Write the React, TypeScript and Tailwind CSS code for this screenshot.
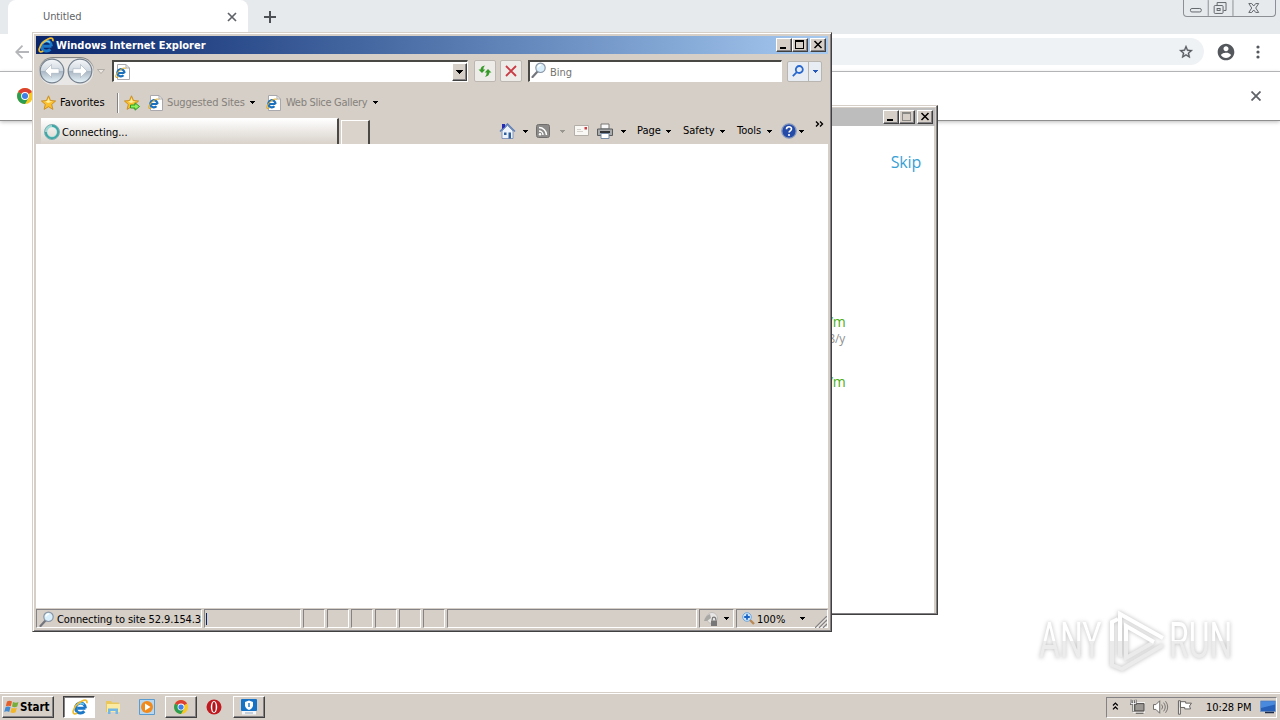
import React from 'react';
import clsx from 'clsx';

const raised =
  'border border-t-white border-l-white border-r-[#404040] border-b-[#404040] shadow-[inset_-1px_-1px_0_#848284]';
const sunken = 'border border-t-[#848284] border-l-[#848284] border-r-white border-b-white';

function IeLogo({ className }: { className?: string }) {
  return (
    <svg viewBox="0 0 16 16" className={clsx('shrink-0', className)} fill="none">
      <path d="M13.500 9.2H5.2M13.500 9.2A5 5 0 1 0 12.300 12.300" stroke="#1b78c8" strokeWidth="3" />
      <path d="M5 6.200A4.7 4.7 0 0 1 12 5.500" stroke="#6ccbf2" strokeWidth="1.4" />
      <path d="M14.8 4.2C15.6 1.2 13.4.4 10 2 5.800 4 2.200 8.300 1.200 12 .6 15.100 2.800 15.500 5.200 14" stroke="#eebb30" strokeWidth="1.7" />
    </svg>
  );
}

function IePage({ className }: { className?: string }) {
  return (
    <svg viewBox="0 0 16 16" className={clsx('h-4 w-4 shrink-0', className)} fill="none">
      <path d="M3.500.5H12l3.500 3.500v11.500h-12z" fill="#fff" stroke="#a9a9ad" />
      <path d="M12 .5V4h3.500" stroke="#a9a9ad" />
      <path d="M10.500 9H4.500M10.500 9A3.600 3.600 0 1 0 9.500 11.300" stroke="#1b70be" strokeWidth="2.200" />
      <path d="M11.700 4.500C10 3 5 5.500 2 11c-1 2.500.5 3 2.500 1.700" stroke="#dfae31" strokeWidth="1.100" />
    </svg>
  );
}

function Caret({ className, color = '#000' }: { className?: string; color?: string }) {
  return (
    <svg viewBox="0 0 5 3" className={clsx('h-[3px] w-[5px] shrink-0', className)} shapeRendering="crispEdges">
      <path d="M0 0h5v1H4v1H3v1H2V2H1V1H0z" fill={color} />
    </svg>
  );
}

function ChromeLogo({ className }: { className?: string }) {
  return (
    <svg viewBox="0 0 16 16" className={clsx('h-4 w-4 shrink-0', className)}>
      <circle cx="8" cy="8" r="8" fill="#f9c823" />
      <path d="M8 8 1.100 4A8 8 0 0 1 14.900 4z" fill="#dc3f34" />
      <path d="M1.100 4A8 8 0 0 0 8 16l3.500-6L8 8z" fill="#2b9e54" />
      <circle cx="8" cy="8" r="3.900" fill="#fff" />
      <circle cx="8" cy="8" r="3" fill="#3f7fe6" />
    </svg>
  );
}

function Magnifier({ className }: { className?: string }) {
  return (
    <svg viewBox="0 0 16 16" className={clsx('h-4 w-4 shrink-0', className)} fill="none">
      <path d="M6.500 9.500 1.500 15" stroke="#73777d" strokeWidth="2.200" strokeLinecap="round" />
      <circle cx="9.500" cy="5.800" r="4.700" fill="#d9effb" stroke="#8a96a6" strokeWidth="1.200" />
      <path d="M7 5.500A3 3 0 0 1 10 3" stroke="#fff" strokeWidth="1.500" />
    </svg>
  );
}

function Star({ add }: { add?: boolean }) {
  return (
    <svg viewBox="0 0 16 16" className="h-4 w-4 shrink-0">
      <path d="m7.500.8 2 4.700 5.100.5-3.900 3.400 1.200 5-4.400-2.700-4.400 2.700 1.200-5L.4 6l5.100-.5z" fill="#fbc02e" stroke="#c98a1c" strokeWidth=".9" />
      <path d="m7.500 3 1.200 3.200 3 .3L7 8 4 6.400l2.400-.3z" fill="#fff0a6" />
      {add && <path d="M6.500 10h4.500V7.800l4.500 3.700-4.500 3.700V13H6.500z" fill="#8ff05a" stroke="#2b9b26" />}
    </svg>
  );
}

type WindowButtonKind = 'min' | 'max' | 'close';

function WindowButton({ kind, disabled }: { kind: WindowButtonKind; disabled?: boolean }) {
  return (
    <div className={clsx('flex h-[14px] w-4 items-center justify-center bg-[#d6cfc7]', raised, kind === 'close' && 'ml-0.5')}>
      <svg viewBox="0 0 12 10" className="h-[10px] w-3 shrink-0" fill="none">
        {kind === 'min' && <path d="M2 8h6" stroke="#000" strokeWidth="2" />}
        {kind === 'max' && (
          <path d="M1.500.5h8v8h-8zM1 1.500h9" stroke={disabled ? '#8b8985' : '#000'} shapeRendering="crispEdges" />
        )}
        {kind === 'close' && <path d="m2.500 1 7 7M9.500 1l-7 7" stroke="#000" strokeWidth="1.500" />}
      </svg>
    </div>
  );
}

function NavCircle({ flip }: { flip?: boolean }) {
  return (
    <svg viewBox="0 0 26 26" className={clsx('h-[26px] w-[26px] shrink-0', flip && '-scale-x-100')}>
      <defs>
        <linearGradient id="nav" x1="0" y1="0" x2="0" y2="1">
          <stop offset="0" stopColor="#f6f8fa" />
          <stop offset=".48" stopColor="#d0d8e0" />
          <stop offset=".52" stopColor="#aab7c4" />
          <stop offset="1" stopColor="#e8f4fa" />
        </linearGradient>
      </defs>
      <circle cx="13" cy="13" r="11.800" fill="url(#nav)" stroke="#74808d" strokeWidth="1.200" />
      <path d="m12.500 6.500-6.500 6.500 6.500 6.500v-4.200H20v-4.600h-7.500z" fill="#fff" stroke="#a4b0bc" strokeWidth=".6" />
    </svg>
  );
}

function ChromeWindow() {
  return (
    <div className="flex h-[692px] flex-col bg-white">
      <div className="flex h-[34px] bg-[#e7eaed] pl-2">
        <div className="flex w-60 items-center rounded-t-lg bg-white pr-[11px] pl-[35px]">
          <span className="flex-1 pt-px text-[11px] tracking-[-0.1px] text-[#5f6368]">Untitled</span>
          <svg viewBox="0 0 10 10" className="h-[10px] w-[10px]" stroke="#5f6368" strokeWidth="1.700">
            <path d="m1 1 8 8M9 1 1 9" />
          </svg>
        </div>
        <svg viewBox="0 0 12 12" className="mt-[11px] ml-4 h-3 w-3" stroke="#4d5156" strokeWidth="2">
          <path d="M6 0v12M0 6h12" />
        </svg>
        <div className="mr-[4px] ml-auto flex h-[17px] w-[93px] rounded-b-[4px] border border-t-0 border-[#8c9094]">
          <svg viewBox="0 0 92 16" className="h-4 w-[91px]" fill="none" stroke="#62676c">
            <path d="M24.500 0v16M49.500 0v16" stroke="#8c9094" />
            <rect x="6.500" y="8.500" width="11" height="3.500" rx="1.500" />
            <path d="M33.500 5V2.500h9v8H40" />
            <rect x="30.500" y="5.500" width="9" height="8" rx="1" />
            <rect x="33.500" y="8.500" width="3" height="2" />
            <path d="M65.500 3.500h3l2 2.500 2-2.500h3l-3 4.500 3 4.500h-3l-2-2.500-2 2.500h-3l3-4.500z" />
          </svg>
        </div>
      </div>
      <div className="flex h-[38px] items-center border-b border-[#b0b2b4] pr-[15px] pb-[2px] pl-[15px]">
        <svg viewBox="0 0 14 14" className="h-[14px] w-[14px]" fill="none" stroke="#b4b6b9" strokeWidth="1.800">
          <path d="M7.500.7 1.200 7l6.300 6.300M1 7h13" />
        </svg>
        <div className="ml-[10px] flex h-[27px] flex-1 items-center justify-end rounded-full bg-[#eff2f5] pr-[10px]">
          <svg viewBox="0 0 24 24" className="h-4 w-4" fill="#54585d" stroke="#54585d" strokeWidth=".5">
            <path d="M22 9.240l-7.190-.62L12 2 9.190 8.630 2 9.240l5.460 4.730L5.820 21 12 17.270 18.180 21l-1.630-7.030L22 9.240zM12 15.400l-3.760 2.270 1-4.280-3.320-2.880 4.380-.38L12 6.100l1.710 4.040 4.380.38-3.320 2.880 1 4.280L12 15.400z" />
          </svg>
        </div>
        <svg viewBox="0 0 24 24" className="ml-[12px] h-5 w-5" fill="#54585d">
          <path d="M12 2C6.480 2 2 6.480 2 12s4.480 10 10 10 10-4.480 10-10S17.520 2 12 2zm0 3c1.660 0 3 1.340 3 3s-1.340 3-3 3-3-1.340-3-3 1.340-3 3-3zm0 14.200c-2.500 0-4.710-1.280-6-3.220.03-1.990 4-3.080 6-3.080 1.990 0 5.970 1.090 6 3.080-1.290 1.940-3.500 3.220-6 3.220z" />
        </svg>
        <svg viewBox="0 0 4 14" className="ml-[20px] h-[14px] w-1" fill="#54585d">
          <circle cx="2" cy="2" r="1.600" />
          <circle cx="2" cy="7" r="1.600" />
          <circle cx="2" cy="12" r="1.600" />
        </svg>
        <div className="w-[5px]" />
      </div>
      <div className="flex h-[49px] items-center justify-between border-b border-[#8e8e8e] pr-[19px] pl-[17px] shadow-[0_1px_4px_#bbb]">
        <ChromeLogo />
        <svg viewBox="0 0 10 10" className="h-[10px] w-[10px]" stroke="#5f6368" strokeWidth="1.800">
          <path d="m.5.5 9 9M9.500.5l-9 9" />
        </svg>
      </div>
    </div>
  );
}

function SetupWindow() {
  return (
    <div className="absolute top-[105px] left-[430px] flex h-[510px] w-[508px] flex-col border border-t-[#d6cfc7] border-l-[#d6cfc7] border-r-[#404040] border-b-[#404040] bg-white shadow-[inset_-1px_-1px_0_#848284,inset_1px_1px_0_#fff,inset_-3px_2px_0_#d6cfc7]">
      <div className="mt-[2px] mr-[2px] ml-[3px] flex h-[18px] items-center justify-end bg-[#bdbdbd] pr-0.5">
        <WindowButton kind="min" />
        <WindowButton kind="max" disabled />
        <WindowButton kind="close" />
      </div>
      <div className="flex flex-col items-end font-['Open_Sans',sans-serif]">
        <span className="mt-[25px] mr-4 text-[16px] leading-[22px] tracking-[-0.2px] text-[#399fd3]">Skip</span>
        <div className="mt-[140px] mr-[92px] flex flex-col items-end tracking-[-0.600px]">
          <span className="text-[14px] leading-[18px] text-[#4cae16]">$4.99/m</span>
          <span className="text-[12px] leading-4 tracking-[-0.200px] text-[#919191]">$59.88/y</span>
          <span className="mt-[26px] text-[14px] leading-[18px] text-[#4cae16]">$9.99/m</span>
        </div>
      </div>
    </div>
  );
}

function AddressRow() {
  return (
    <div className="flex h-[34px] items-center pl-[3px]">
      <div className="flex h-[28px] w-[55px] items-center gap-0.5 rounded-full bg-[#e9e7e5] shadow-[inset_0_1px_1px_#777]">
        <NavCircle />
        <NavCircle flip />
      </div>
      <svg viewBox="0 0 8 5" className="ml-[3px] h-[5px] w-2" fill="#ece8e4" stroke="#a7a29b" strokeWidth=".8">
        <path d="M.5.5h7L4 4.500z" />
      </svg>
      <div className="ml-[7px] flex h-[22px] w-[356px] items-center border-t-2 border-l-2 border-r border-b border-t-[#4a4845] border-l-[#4a4845] border-r-white border-b-white bg-white">
        <IePage />
        <div className={clsx('ml-auto flex h-[18px] w-[15px] items-center justify-center bg-[#d6cfc7]', raised)}>
          <svg viewBox="0 0 7 4" className="h-1 w-[7px]" shapeRendering="crispEdges">
            <path d="M0 0h7v1H6v1H5v1H4v1H3V3H2V2H1V1H0z" />
          </svg>
        </div>
      </div>
      <div className="ml-[6px] flex h-[22px] w-[22px] items-center justify-center rounded-[2px] border border-[#bcb7b1] bg-[#eeece9]">
        <svg viewBox="0 0 16 16" className="h-4 w-4 shrink-0" fill="#369a28">
          <path d="M1.500 6.500h2Q3.800 3 8 2.500 6.300 4 6.300 6.500h2L5 10z" />
          <path d="M14.500 9.500h-2q-.3 3.500-4.500 4.500 1.800-2 1.700-4.500h-2L11 6z" />
        </svg>
      </div>
      <div className="ml-1 flex h-[22px] w-[22px] items-center justify-center rounded-[2px] border border-[#bcb7b1] bg-[#eeece9]">
        <svg viewBox="0 0 12 12" className="h-3 w-3" stroke="#c93c45" strokeWidth="1.900">
          <path d="m1 1 10 10M11 1 1 11" />
        </svg>
      </div>
      <div className="ml-[6px] flex h-[22px] w-[254px] items-center border-t-2 border-l-2 border-r border-b border-t-[#4a4845] border-l-[#4a4845] border-r-white border-b-white bg-white pl-px">
        <Magnifier className="mb-[3px]" />
        <span className="ml-[3px] pt-0.5 text-[#76736f]">Bing</span>
      </div>
      <div className="ml-[5px] flex h-[21px] w-[35px] rounded-[2px] border border-[#b9b5b1] bg-[#e8ecf3]">
        <div className="flex w-[21px] items-center justify-center border-r border-[#b9b5b1]">
          <svg viewBox="0 0 12 12" className="h-3 w-3" fill="none" stroke="#2767ce" strokeWidth="1.800">
            <circle cx="7.300" cy="4.500" r="3.500" />
            <path d="M4.800 7.200.8 11.200" />
          </svg>
        </div>
        <div className="flex flex-1 items-center justify-center">
          <Caret color="#2558b8" />
        </div>
      </div>
    </div>
  );
}

function FavoritesRow() {
  return (
    <div className="flex h-[29px] items-center pl-[5px]">
      <Star />
      <span className="ml-[3px] w-[46px]">Favorites</span>
      <div className="ml-[11px] h-5 w-0.5 border-r border-l border-r-white border-l-[#848284]" />
      <div className="ml-[5px]">
        <Star add />
      </div>
      <IePage className="ml-[7px]" />
      <span className="ml-[4px] w-[78px] pt-px tracking-[-0.150px] text-[#85817c]">Suggested Sites</span>
      <Caret className="ml-[5px]" />
      <IePage className="ml-[10px]" />
      <span className="ml-[5px] w-[83px] pt-px tracking-[-0.300px] text-[#85817c]">Web Slice Gallery</span>
      <Caret className="ml-[4px]" />
    </div>
  );
}

function TabRow() {
  return (
    <div className="flex h-[27px] items-end pl-[5px]">
      <div className="flex h-[26px] w-[298px] items-center border-t border-r-2 border-t-white border-r-[#4a4845] bg-linear-to-b from-white to-[#d8d2ca] pt-px pl-[3px]">
        <svg viewBox="0 0 16 16" className="h-4 w-4" fill="none">
          <circle cx="8" cy="8" r="6.200" stroke="#9bd8d5" strokeWidth="3" />
          <path d="M8 1.800A6.200 6.200 0 1 1 1.800 8" stroke="#3da7a6" strokeWidth="2" />
          <circle cx="8" cy="8" r="7.500" stroke="#6e9ba0" strokeWidth=".7" />
        </svg>
        <span className="ml-0.5 pt-px">Connecting...</span>
      </div>
      <div className="ml-0.5 h-6 w-[29px] border-t border-r-2 border-l border-t-white border-r-[#4a4845] border-l-white bg-[#d9d3cc]" />
      <div className="ml-[129px] flex h-[26px] items-center">
        <svg viewBox="0 0 17 16" className="mb-px h-4 w-[17px]">
          <path d="M3 8v7.500h11V8L8.500 2.500z" fill="#eef4fc" stroke="#6e87b4" strokeWidth=".8" />
          <path d="M1 8.500 8.500 1 16 8.500" fill="none" stroke="#5e80b8" strokeWidth="1.500" />
          <path d="M3 1h3v3L3 6z" fill="#242bb6" />
          <path d="M5 9.500h2.500V12H5zM9.500 9.500H12v6H9.500z" fill="#315f9b" />
        </svg>
        <Caret className="ml-[7px]" />
        <svg viewBox="0 0 14 14" className="ml-[8px] h-[14px] w-[14px]" fill="none">
          <rect x=".5" y=".5" width="13" height="13" rx="2" fill="#8d8b89" stroke="#706e6c" />
          <path d="M3 3.500A7.500 7.500 0 0 1 10.500 11M3 7a4 4 0 0 1 4 4" stroke="#fff" strokeWidth="1.500" />
          <circle cx="4" cy="10.300" r="1.200" fill="#fff" />
        </svg>
        <Caret className="ml-[10px]" color="#99958f" />
        <svg viewBox="0 0 15 12" className="ml-[9px] h-3 w-[15px]">
          <path d="M.5.5h14v10H.5z" fill="#faf8f5" stroke="#b3aea7" />
          <path d="M3 4.500h4M3 6.500h6" stroke="#d5d2ce" />
          <path d="M10.500 2h2.500v2.500h-2.500z" fill="#cf3d43" />
        </svg>
        <svg viewBox="0 0 16 16" className="mb-px ml-[8px] h-4 w-4">
          <path d="M4 1h8v5H4z" fill="#f8f8f8" stroke="#777" />
          <path d="M.5 6h15v6.500H.5z" fill="#a9abad" stroke="#5a5c5f" />
          <path d="M3 8h10v2H3z" fill="#303235" />
          <path d="M4 10.500h8v5H4z" fill="#fff" stroke="#758aa6" />
        </svg>
        <Caret className="ml-[8px]" />
        <span className="ml-[11px] w-[25px]">Page</span>
        <Caret className="ml-[4px]" />
        <span className="ml-[12px] w-[33px]">Safety</span>
        <Caret className="ml-[4px]" />
        <span className="ml-[12px] w-[26px]">Tools</span>
        <Caret className="ml-[4px]" />
        <svg viewBox="0 0 16 16" className="mb-px ml-[9px] h-4 w-4" fill="none">
          <circle cx="8" cy="8" r="7.200" fill="#254ba8" stroke="#8698bd" strokeWidth="1.300" />
          <path d="M5.500 6.200C5.500 2.900 10.700 3 10.500 6c-.1 1.900-2.400 1.700-2.400 3.500" stroke="#fff" strokeWidth="1.600" />
          <circle cx="8" cy="12" r="1.100" fill="#fff" />
        </svg>
        <Caret className="ml-[2px]" />
        <svg viewBox="0 0 9 6" className="mb-[14px] ml-[11px] h-[6px] w-[9px]" fill="none" stroke="#000" strokeWidth="1.400">
          <path d="m1 .5 2.500 2.500L1 5.500M5 .5 7.500 3 5 5.500" />
        </svg>
      </div>
    </div>
  );
}

function StatusBar() {
  return (
    <div className="flex h-5 gap-0.5 bg-[#d6cfc7] pt-px">
      <div className={clsx('flex w-[166px] items-center overflow-hidden pl-0.5 whitespace-nowrap', sunken)}>
        <Magnifier />
        <span className="ml-[2px] pt-0.5 tracking-[-0.100px]">Connecting to site 52.9.154.3</span>
      </div>
      <div className={clsx('flex w-[97px] items-center pl-px', sunken)}>
        <div className="h-3 w-px bg-[#0a246a]" />
      </div>
      {[0, 1, 2, 3, 4, 5].map((i) => (
        <div key={i} className={clsx('w-[22px]', sunken)} />
      ))}
      <div className={clsx('flex-1', sunken)} />
      <div className={clsx('flex w-[35px] items-center pl-[3px]', sunken)}>
        <svg viewBox="0 0 16 16" className="h-4 w-4" fill="none">
          <circle cx="9" cy="7" r="5.500" fill="#e8e6e4" stroke="#c0bdb9" />
          <path d="M1 10c1-4 3-6 6-7l1 4-4 3z" fill="#aaa8a5" />
          <path d="M8 9.500h6V15H8z" fill="#777" />
          <path d="M9.200 9.500V8a1.800 1.800 0 0 1 3.600 0v1.500" stroke="#777" strokeWidth="1.200" />
        </svg>
        <Caret className="ml-[5px]" />
      </div>
      <div className={clsx('flex w-[92px] items-center pl-[5px]', sunken)}>
        <svg viewBox="0 0 13 13" className="h-[13px] w-[13px]" fill="none">
          <path d="m8 8 4 4" stroke="#b98a55" strokeWidth="2.400" />
          <circle cx="5" cy="5" r="4.300" fill="#cfe7fb" stroke="#6fa6dd" />
          <path d="M5 2.200v5.600M2.200 5h5.600" stroke="#1c64c4" strokeWidth="1.800" />
        </svg>
        <span className="ml-[2px] w-[30px] pt-0.5">100%</span>
        <Caret className="ml-[13px]" />
        <svg viewBox="0 0 12 12" className="mt-[6px] ml-auto h-3 w-3" fill="none">
          <path d="M0 12 12 0M4 12l8-8M8 12l4-4" stroke="#848284" strokeWidth="1.300" />
          <path d="m1.500 12 10.500-10.500M5.500 12 12 5.500M9.500 12 12 9.500" stroke="#fff" strokeWidth=".7" />
        </svg>
      </div>
    </div>
  );
}

function ExplorerWindow() {
  return (
    <div className="absolute top-[32px] left-[32px] flex h-[600px] w-[800px] flex-col border border-t-[#d6cfc7] border-l-[#d6cfc7] border-r-[#404040] border-b-[#404040] bg-[#d6cfc7] p-[3px] text-[11px] leading-[14px] whitespace-nowrap text-black shadow-[inset_1px_1px_0_#fff,inset_-1px_-1px_0_#848284]">
      <div className="flex h-[18px] items-center bg-linear-to-r from-[#0a246a] to-[#a6caf0] pr-[2px] pl-0.5">
        <IeLogo className="h-4 w-4" />
        <span className="ml-0.5 pt-px font-bold text-white">Windows Internet Explorer</span>
        <div className="ml-auto flex">
          <WindowButton kind="min" />
          <WindowButton kind="max" />
          <WindowButton kind="close" />
        </div>
      </div>
      <AddressRow />
      <FavoritesRow />
      <TabRow />
      <div className="flex-1 bg-white" />
      <StatusBar />
    </div>
  );
}

function Taskbar() {
  return (
    <div className="flex h-7 items-center border-t border-[#d6cfc7] bg-[#d6cfc7] pt-px pr-[3px] pl-[2px] text-[11px] shadow-[inset_0_1px_0_#fff]">
      <div className={clsx('flex h-[22px] w-[52px] items-center pl-px', raised)}>
        <svg viewBox="0 0 16 16" className="h-4 w-4 shrink-0">
          <path d="M3 2.500q2.500-1.500 5 0L6.800 7.300q-2.500-1.300-5 0z" fill="#e3602b" />
          <path d="M9 3q3 1.300 5.500 0l-1.300 4.600q-2.500 1.300-5.200 0z" fill="#76ad3b" />
          <path d="M1.500 8.300q2.500-1.400 5 0L5.200 13q-2.500-1.300-5 0z" fill="#428bd3" />
          <path d="M7.600 8.700q2.700 1.300 5.300 0l-1.300 4.600q-2.600 1.300-5.200 0z" fill="#f2b629" />
        </svg>
        <span className="pt-px text-[11.500px] font-bold">Start</span>
      </div>
      <div className="ml-[9px] flex h-[22px] w-8 items-center justify-center border border-t-[#404040] border-l-[#404040] border-r-white border-b-white bg-white pl-px shadow-[inset_1px_1px_0_#848284]">
        <IeLogo className="h-4 w-4" />
      </div>
      <svg viewBox="0 0 16 16" className="ml-[10px] h-4 w-4">
        <path d="M1 2h5l1 1.500h7V13H1z" fill="#e9c75d" />
        <path d="M2 5h13v8H2z" fill="#fbeaa2" />
        <path d="M3 15V9.500h10V15h-2.500v-3h-5v3z" fill="#73b8e4" />
      </svg>
      <svg viewBox="0 0 16 16" className="ml-[18px] h-4 w-4">
        <path d="M.5.5h15v15H.5z" fill="#b6d7ef" stroke="#5a9bd0" />
        <circle cx="8" cy="8" r="6" fill="#f18a1d" />
        <path d="m6 4.500 5.500 3.500L6 11.500z" fill="#fff" />
      </svg>
      <div className={clsx('ml-[10px] flex h-[22px] w-8 items-center justify-center', raised)}>
        <ChromeLogo className="h-[14px] w-[14px]" />
      </div>
      <svg viewBox="0 0 16 16" className="ml-[9px] h-4 w-4">
        <circle cx="8" cy="8" r="7.500" fill="#c01920" />
        <ellipse cx="8" cy="8" rx="3.200" ry="6" fill="#fff" />
        <ellipse cx="8" cy="8" rx="1.700" ry="5" fill="#ad161c" />
      </svg>
      <div className={clsx('ml-[11px] flex h-[22px] w-8 items-center justify-center', raised)}>
        <svg viewBox="0 0 16 16" className="h-4 w-4">
          <rect width="16" height="12" rx="1" fill="#1672c4" />
          <path d="M1 12h14v3.500H1z" fill="#f4f7fa" />
          <path d="M4 14h8" stroke="#93a9bd" />
          <path d="M8 1.500 12 3v3.500Q11.500 9.500 8 11 4.500 9.500 4 6.500V3z" fill="#fff" />
          <path d="M7.300 4h1.400v4H7.300z" fill="#1672c4" />
        </svg>
      </div>
      <div className={clsx('ml-auto flex h-[21px] w-[171px] items-center pl-[5px]', sunken)}>
        <svg viewBox="0 0 7 8" className="mb-[2px] h-2 w-[7px]" fill="none" stroke="#000" strokeWidth="1.300">
          <path d="M1 3.500 3.500 1 6 3.500M1 7.500 3.500 5 6 7.500" />
        </svg>
        <svg viewBox="0 0 16 16" className="ml-[11px] h-4 w-4" fill="none">
          <path d="M3.500 3.500h12v10h-12z" fill="#9b9894" stroke="#fff" />
          <path d="M5 4.500h9.500v7.500H5zM6 14.500h8" stroke="#4e4c4a" />
          <path d="M1 .5v4h5v-4M3.500 1v12" stroke="#4e4c4a" strokeWidth="2.200" />
          <path d="M1 .5v4h5v-4M3.500 1v11.500" stroke="#fff" />
        </svg>
        <svg viewBox="0 0 16 16" className="ml-2 h-4 w-4" fill="none">
          <path d="M.5 5.500H3L7 1.500v13L3 10.500H.5z" fill="#fff" stroke="#686562" />
          <path d="M9 5.500q2 2.500 0 5M11 3.500q3.500 4.500 0 9M13 2q4.500 6 0 12" stroke="#77736f" />
        </svg>
        <svg viewBox="0 0 16 16" className="ml-2 h-4 w-4" fill="#fff" stroke="#63605d">
          <path d="M1.500 1.500h2v14h-2zM3.500 2.500H9V4h6l-2 3 1 3H8V8.500H3.500z" />
        </svg>
        <span className="ml-[14px] w-[45px] pt-0.5 tracking-[-0.100px] whitespace-nowrap">10:28 PM</span>
        <svg viewBox="0 0 16 14" className="ml-[9px] h-[14px] w-4 shrink-0">
          <path d="M.5 1h15v10.500H.5z" fill="#2660b8" stroke="#7897c3" />
          <path d="M1 1.500h14v3L1 8z" fill="#4a8ade" />
          <path d="M5 12.500h9" stroke="#1b2c4d" strokeWidth="1.500" />
        </svg>
      </div>
    </div>
  );
}

function Watermark() {
  const word =
    'inline-block bg-linear-to-b from-white from-50% to-[#ececec] to-50% bg-clip-text text-transparent leading-[48px]';
  return (
    <div className="absolute top-[609px] left-[1039px] flex h-16 w-[200px] items-center font-['Roboto',sans-serif] text-[50px] drop-shadow-[0_0_2px_#bbb]">
      <div className="w-[65px]">
        <span className={clsx(word, 'origin-left scale-x-[0.640]')}>ANY</span>
      </div>
      <svg viewBox="0 0 62 64" className="h-16 w-[62px] shrink-0" fill="none" strokeWidth="4">
        <path d="M8 30v26l10 4 41-24M22 32v17l28-16" stroke="#ebebeb" />
        <path d="M16 32v16" stroke="#ebebeb" />
        <path d="M16 32V5l43 24M8 32V13l6-3M22 32V17l28 16" stroke="#fff" />
      </svg>
      <div className="ml-[3px] w-[66px]">
        <span className={clsx(word, 'origin-left scale-x-[0.640]')}>RUN</span>
      </div>
    </div>
  );
}

export default function App() {
  return (
    <div className="relative h-[720px] w-[1280px] overflow-hidden bg-white font-['DejaVu_Sans_Condensed','DejaVu_Sans',sans-serif]">
      <ChromeWindow />
      <Taskbar />
      <SetupWindow />
      <ExplorerWindow />
      <Watermark />
    </div>
  );
}
